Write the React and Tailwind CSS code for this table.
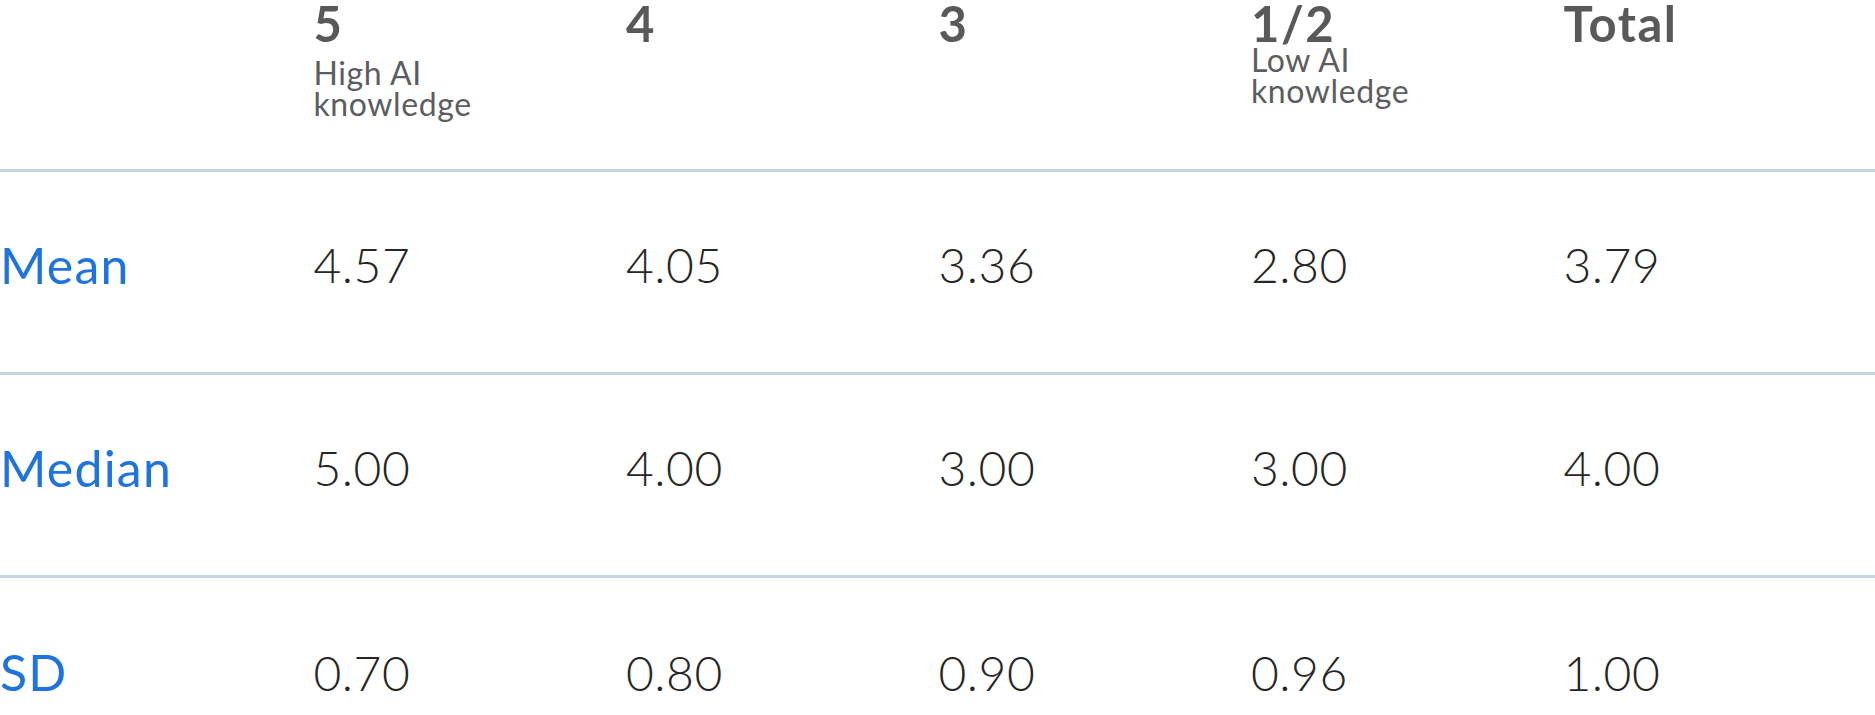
import React from 'react';

const columns = [
    { label: '5', note: ['High AI', 'knowledge'], noteClass: 'mt-[11px]' },
    { label: '4' },
    { label: '3' },
    { label: '1/2', note: ['Low AI', 'knowledge'], noteClass: '-mt-[2px]' },
    { label: 'Total' },
];

const rows = [
    { name: 'Mean', values: ['4.57', '4.05', '3.36', '2.80', '3.79'] },
    { name: 'Median', values: ['5.00', '4.00', '3.00', '3.00', '4.00'] },
    { name: 'SD', values: ['0.70', '0.80', '0.90', '0.96', '1.00'] },
];

export default function App() {
    return (
        <div className="w-[1875px] h-[715px] overflow-hidden bg-white font-['Lato','Liberation_Sans',sans-serif]">
            <div className="grid grid-cols-6 h-[172px] border-b-[3px] border-[#c9d4e1]">
                <div />
                {columns.map(col => (
                    <div key={col.label} className="pl-[1px]">
                        <div className="text-[49px] leading-[46px] tracking-[1.5px] font-bold text-[#58595b]">{col.label}</div>
                        {col.note && (
                            <div className={`${col.noteClass} text-[32px] leading-[31px] tracking-[0.6px] text-[#5c5d60]`}>
                                {col.note.map(line => <div key={line}>{line}</div>)}
                            </div>
                        )}
                    </div>
                ))}
            </div>
            {rows.map(row => (
                <div key={row.name} className="grid grid-cols-6 items-center h-[203px] pb-[14px] border-b-[3px] border-[#c9d4e1] last:border-b-0">
                    <div className="text-[50px] tracking-[1.2px] text-[#1f73df]">{row.name}</div>
                    {row.values.map((v, i) => (
                        <div key={i} className="pl-[1px] text-[48px] font-light tracking-[0.5px] text-[#262626]">{v}</div>
                    ))}
                </div>
            ))}
        </div>
    );
}
